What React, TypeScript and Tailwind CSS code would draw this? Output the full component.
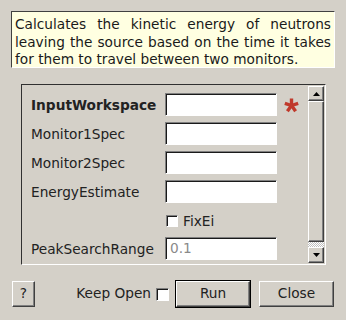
import React from "react";

const bevel =
  "border border-t-white border-l-white border-b-[#404040] border-r-[#404040] shadow-[inset_-1px_-1px_0_#808080] bg-[#d4d0c8]";
const sunken =
  "border border-t-[#808080] border-l-[#808080] border-b-white border-r-white shadow-[inset_1px_1px_0_#1a1a1a] bg-white";

function Asterisk() {
  const arms = [-90, -18, 54, 126, 198];
  return (
    <svg width="17" height="17" viewBox="0 0 17 17">
      {arms.map((a) => {
        const r = (a * Math.PI) / 180;
        return (
          <line
            key={a}
            x1={8.5}
            y1={8.5}
            x2={8.5 + Math.cos(r) * 7}
            y2={8.5 + Math.sin(r) * 7}
            stroke="#c0392b"
            strokeWidth={3.4}
            strokeLinecap="butt"
          />
        );
      })}
    </svg>
  );
}

function Row({ label, bold, value, star }: { label: string; bold?: boolean; value?: string; star?: boolean }) {
  return (
    <div className="flex items-center h-[23px] shrink-0">
      <div className={"w-[134px] pt-[2px] text-[#222] " + (bold ? "font-bold" : "")}>{label}</div>
      <div className={"w-[112px] h-[23px] flex items-center pl-[4px] pt-[1px] text-[#8a8a8a] " + sunken}>{value}</div>
      {star && (
        <div className="ml-[6px] mt-[1px]">
          <Asterisk />
        </div>
      )}
    </div>
  );
}

function CheckBox() {
  return <div className={"w-[12px] h-[12px] " + sunken}></div>;
}

export default function App() {
  return (
    <div className="w-[346px] h-[320px] bg-[#d4d0c8] pt-[11px] flex flex-col font-['DejaVu_Sans',sans-serif] text-[13.7px] leading-none overflow-hidden">
      <div className="ml-[11px] w-[324px] h-[57px] bg-[#ffffe1] border border-t-[#404040] border-l-[#404040] border-b-white border-r-white pl-[3px] pr-[3px] pt-[4px] text-[#1a1a1a] leading-[17.5px]">
        <div className="text-justify [text-align-last:justify]">Calculates the kinetic energy of neutrons</div>
        <div className="text-justify [text-align-last:justify]">leaving the source based on the time it takes</div>
        <div>for them to travel between two monitors.</div>
      </div>

      <div className="ml-[21px] mt-[16px] w-[305px] h-[181px] border border-t-[#303030] border-l-[#303030] border-b-white border-r-white p-[1px] flex">
        <div className="flex-1 overflow-hidden pl-[8px] pt-[7px] flex flex-col gap-[6px]">
          <Row label="InputWorkspace" bold star />
          <Row label="Monitor1Spec" />
          <Row label="Monitor2Spec" />
          <Row label="EnergyEstimate" />
          <div className="flex items-center h-[22px] shrink-0 pl-[135px] pt-[2px]">
            <CheckBox />
            <span className="ml-[5px] pt-[2px] text-[#222]">FixEi</span>
          </div>
          <Row label="PeakSearchRange" value="0.1" />
        </div>
        <div className="w-[16px] flex flex-col">
          <div className={"h-[15px] flex items-center justify-center " + bevel}>
            <svg width="7" height="4" viewBox="0 0 7 4"><polygon points="0,4 7,4 3.5,0" fill="#000" /></svg>
          </div>
          <div className={"h-[141px] " + bevel}></div>
          <div className="h-[5px] bg-[repeating-conic-gradient(#ffffff_0%_25%,#c0c0c0_0%_50%)] bg-[length:2px_2px]"></div>
          <div className={"h-[16px] flex items-center justify-center " + bevel}>
            <svg width="7" height="4" viewBox="0 0 7 4"><polygon points="0,0 7,0 3.5,4" fill="#000" /></svg>
          </div>
        </div>
      </div>

      <div className="mt-[16px] h-[26px] flex items-center justify-between pl-[12px] pr-[12px]">
        <button className={"w-[23px] h-[26px] flex items-center justify-center text-[#222] " + bevel}>?</button>
        <div className="flex items-center">
          <span className="text-[#222]">Keep Open</span>
          <div className="ml-[5px]"><div className={"w-[13px] h-[13px] " + sunken}></div></div>
          <div className="ml-[6px] w-[76px] h-[28px] border border-black">
            <div className={"w-full h-full flex items-center justify-center text-[#222] " + bevel}>Run</div>
          </div>
          <button className={"ml-[8px] w-[75px] h-[26px] flex items-center justify-center text-[#222] " + bevel}>Close</button>
        </div>
      </div>
    </div>
  );
}
